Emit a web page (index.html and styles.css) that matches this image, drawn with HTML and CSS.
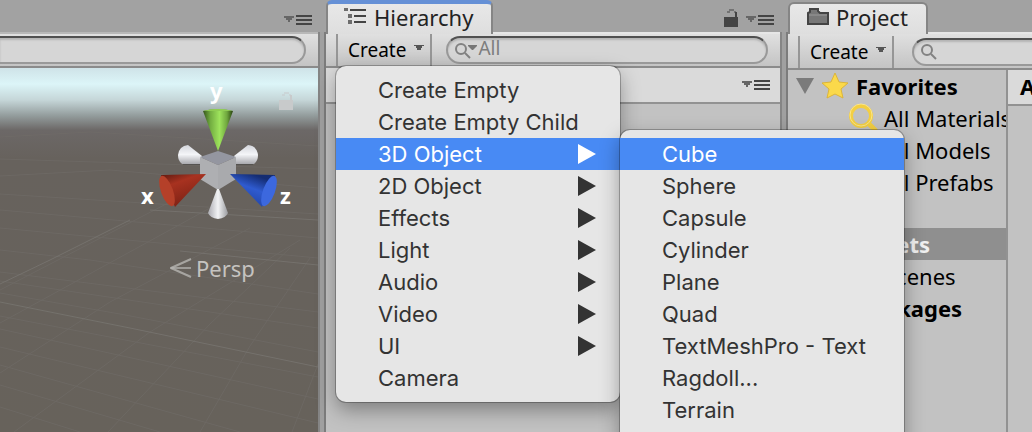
FILE: index.html
```html
<!DOCTYPE html>
<html lang="en">
<head>
  <meta charset="UTF-8">
  <meta name="viewport" content="width=device-width, initial-scale=1.0">
  <title>Unity Editor</title>
  <link rel="stylesheet" href="styles.css">
</head>
<body>
  <!-- shared icons -->
  <svg class="defs" width="0" height="0" aria-hidden="true">
    <symbol id="panel-menu" viewBox="0 0 28 12">
      <path d="M0 2h10v2h-2v2h-2v2h-2v-2h-2v-2h-2z" fill="#666"/>
      <path d="M12 1h16v2h-16zM12 5h16v2h-16zM12 9h16v2h-16z"/>
    </symbol>
    <symbol id="lock" viewBox="0 0 14 18">
      <path d="M0 8h11V3H13V8H14V18H0z"/>
      <path d="M3 4V2H5V0H10V2H12V4H10V2H6V4z" opacity=".5"/>
    </symbol>
    <symbol id="arrow" viewBox="0 0 18 20">
      <path d="M0 0L18 10L0 20z"/>
    </symbol>
    <symbol id="caret" viewBox="0 0 10 6">
      <path d="M0 0h10v1H8v2H7v2H3V3H2V1H0z"/>
    </symbol>
  </svg>

  <main class="editor">
    <section class="panel scene">
      <header class="tabs">
        <button class="icon-btn" aria-label="Scene options"><svg width="28" height="12"><use href="#panel-menu"/></svg></button>
      </header>
      <div class="toolbar">
        <label class="search search-scene"><input type="text" aria-label="Search scene"></label>
      </div>
      <div class="viewport">
        <svg class="grid" viewBox="0 0 318 364" preserveAspectRatio="none">
          <g class="minor">
            <path d="M0 69L90 64L318 78M0 91L318 101M0 108L110 102L318 120M0 126L318 146"/>
            <path d="M0 142L318 170M0 160L318 190M0 182L90 192L318 226M0 204L318 244M0 213L318 260"/>
            <path d="M0 225L120 246L318 284M0 248L318 309M0 261L318 331M0 279L318 355M0 297L240 364M0 317L160 364M0 339L80 364"/>
            <path d="M0 222L170 134M0 255L210 140M0 305L110 234L250 160M14 364L150 264L300 172M108 364L210 256L290 180M200 364L250 278L310 190M292 364L318 296"/>
          </g>
          <path class="major" d="M0 234L130 260L318 299M0 216L50 192L130 152M150 142L318 152M180 183L318 197"/>
        </svg>
        <div class="gizmo">
          <svg width="160" height="150" viewBox="136 78 160 150">
            <defs>
              <linearGradient id="green"><stop offset="0" stop-color="#34551b"/><stop offset=".25" stop-color="#73ae41"/><stop offset=".55" stop-color="#9ee35c"/><stop offset=".8" stop-color="#6fa63e"/><stop offset="1" stop-color="#27400f"/></linearGradient>
              <linearGradient id="white"><stop offset="0" stop-color="#aaaab0"/><stop offset=".5" stop-color="#f2f3f5"/><stop offset="1" stop-color="#999a9e"/></linearGradient>
              <linearGradient id="pale" x2="0" y2="1"><stop offset="0" stop-color="#d4d6dc"/><stop offset=".5" stop-color="#f4f5f8"/><stop offset="1" stop-color="#a9a9ae"/></linearGradient>
              <linearGradient id="red" x2=".5" y2="1"><stop offset="0" stop-color="#5c190f"/><stop offset=".35" stop-color="#a83220"/><stop offset="1" stop-color="#7b2114"/></linearGradient>
              <linearGradient id="blue" x1=".5" x2="0" y2="1"><stop offset="0" stop-color="#142c72"/><stop offset=".35" stop-color="#2f5bd0"/><stop offset="1" stop-color="#1c3a91"/></linearGradient>
            </defs>
            <path d="M183 164h18M235 164h18" stroke="#444" stroke-width="1"/>
            <path d="M178 155Q179 146 188 145L202 156L200 164H182Q178 161 178 155z" fill="url(#pale)"/>
            <path d="M258 155Q257 146 248 145L234 156L236 164H254Q258 161 258 155z" fill="url(#pale)"/>
            <path d="M200 157L218 151L236 157L218 165z" fill="#9496a0"/>
            <path d="M200 157L218 165V190L200 179z" fill="#aeafb2"/>
            <path d="M236 157L218 165V190L236 179z" fill="#a9aaad"/>
            <path d="M203 111Q218 107 233 111L218 151z" fill="url(#green)"/>
            <path d="M203 111Q218 107 233 111z" fill="#8fcd52"/>
            <path d="M217 189H219L228 213Q226 218 218 219Q210 218 208 213z" fill="url(#white)"/>
            <path d="M161 175L206 174L175 207z" fill="url(#red)"/>
            <ellipse cx="167" cy="191" rx="6" ry="16" transform="rotate(-20 167 191)" fill="#b54029"/>
            <path d="M275 175L230 174L262 207z" fill="url(#blue)"/>
            <ellipse cx="269" cy="191" rx="6" ry="16" transform="rotate(20 269 191)" fill="#3c68de"/>
            <g class="axis">
              <text x="210" y="99">y</text>
              <text x="141" y="204">x</text>
              <text x="280" y="204">z</text>
            </g>
          </svg>
          <button class="persp">
            <svg width="22" height="20" viewBox="0 0 22 20" fill="none" stroke="#b7b5b2" stroke-width="2"><path d="M21 1L1 10L21 19" opacity=".8"/><path d="M1 10H21" opacity=".7"/></svg>
            Persp
          </button>
        </div>
        <svg class="scene-lock" width="14" height="18"><use href="#lock"/></svg>
      </div>
    </section>

    <div class="divider"></div>

    <section class="panel hierarchy">
      <header class="tabs">
        <h2 class="tab tab-focus">
          <svg width="24" height="18" viewBox="0 0 24 18" fill="#444"><path d="M0 0h4v3H0zM4 6h4v4H4zM4 12h4v4H4z" opacity=".75"/><path d="M6 1h16v2H6zM10 7h12v2H10zM10 13h12v2H10z"/></svg>
          Hierarchy
        </h2>
        <svg class="lock" width="14" height="18"><use href="#lock"/></svg>
        <button class="icon-btn" aria-label="Hierarchy options"><svg width="28" height="12"><use href="#panel-menu"/></svg></button>
      </header>
      <div class="toolbar">
        <button class="create">Create <svg width="10" height="6"><use href="#caret"/></svg></button>
        <label class="search">
          <svg width="24" height="18" viewBox="0 0 24 18" fill="none" stroke="#828282" stroke-width="2"><circle cx="7" cy="8" r="5"/><path d="M11 12L16 17"/><path d="M14 4h9v1L19 9h-1L14 5z" fill="#777" stroke="none"/></svg>
          <input type="text" placeholder="All" aria-label="Search hierarchy">
        </label>
      </div>
      <div class="scene-row">
        <button class="icon-btn" aria-label="Scene menu"><svg width="28" height="12"><use href="#panel-menu"/></svg></button>
      </div>

      <div class="menu menu-create" role="menu">
        <button role="menuitem">Create Empty</button>
        <button role="menuitem">Create Empty Child</button>
        <button role="menuitem" class="selected">3D Object <svg width="18" height="20"><use href="#arrow"/></svg></button>
        <button role="menuitem">2D Object <svg width="18" height="20"><use href="#arrow"/></svg></button>
        <button role="menuitem">Effects <svg width="18" height="20"><use href="#arrow"/></svg></button>
        <button role="menuitem">Light <svg width="18" height="20"><use href="#arrow"/></svg></button>
        <button role="menuitem">Audio <svg width="18" height="20"><use href="#arrow"/></svg></button>
        <button role="menuitem">Video <svg width="18" height="20"><use href="#arrow"/></svg></button>
        <button role="menuitem">UI <svg width="18" height="20"><use href="#arrow"/></svg></button>
        <button role="menuitem">Camera</button>
      </div>
      <div class="menu menu-3d" role="menu">
        <button role="menuitem" class="selected">Cube</button>
        <button role="menuitem">Sphere</button>
        <button role="menuitem">Capsule</button>
        <button role="menuitem">Cylinder</button>
        <button role="menuitem">Plane</button>
        <button role="menuitem">Quad</button>
        <button role="menuitem">TextMeshPro - Text</button>
        <button role="menuitem">Ragdoll...</button>
        <button role="menuitem">Terrain</button>
      </div>
    </section>

    <div class="divider"></div>

    <section class="panel project">
      <header class="tabs">
        <h2 class="tab">
          <svg width="24" height="20" viewBox="0 0 24 20"><path d="M2 6L4 5V2H12V4L14 6H22V17H2z" fill="#777" stroke="#444" stroke-width="2"/><path d="M3 8H21" stroke="#999"/></svg>
          Project
        </h2>
      </header>
      <div class="toolbar">
        <button class="create">Create <svg width="10" height="6"><use href="#caret"/></svg></button>
        <label class="search">
          <svg width="18" height="18" viewBox="0 0 18 18" fill="none" stroke="#828282" stroke-width="2"><circle cx="7" cy="7" r="5"/><path d="M11 11L16 16"/></svg>
          <input type="text" aria-label="Search project">
        </label>
      </div>
      <div class="browser">
        <ul class="tree">
          <li class="root">
            <svg width="18" height="16" viewBox="0 0 18 16"><path d="M0 0H18L9 16z" fill="#7b7b7b"/></svg>
            <svg width="28" height="28" viewBox="0 0 28 28"><path d="M14 1L18 10L27 11L20 17L22 26L14 22L6 26L8 17L1 11L10 10z" fill="#fbd94a" stroke="#dcb53a"/></svg>
            Favorites
          </li>
          <li class="child">
            <svg width="30" height="30" viewBox="0 0 30 30" fill="none" stroke="#f3cf42" stroke-width="4"><circle cx="13" cy="13" r="10"/><path d="M20 20L28 28" stroke-width="5"/><circle cx="13" cy="12" r="11" stroke="#fbe58a" stroke-width="1"/></svg>
            All Materials
          </li>
          <li class="child"><span class="space"></span>All Models</li>
          <li class="child"><span class="space"></span>All Prefabs</li>
          <li class="root assets"><span class="space"></span>Assets</li>
          <li class="child"><span class="space"></span>Scenes</li>
          <li class="root"><span class="space"></span>Packages</li>
        </ul>
        <div class="content"><h3>Assets</h3></div>
      </div>
    </section>
  </main>
</body>
</html>
```
FILE: styles.css
```css
* {
  box-sizing: border-box;
}

body {
  margin: 0;
  background: #a2a2a2;
  font-family: "Noto Sans", "Open Sans", sans-serif;
  font-size: 22px;
  line-height: 32px;
  color: #000;
  overflow: hidden;
}

button {
  font: inherit;
  color: inherit;
  border: 0;
  padding: 0;
  background: none;
}

h2, h3, ul {
  margin: 0;
  padding: 0;
}

svg {
  flex: none;
}

.defs {
  position: absolute;
}

.editor {
  display: grid;
  grid-template-columns: minmax(0, 318fr) 8px minmax(0, 454fr) 8px minmax(0, 244fr);
  min-height: 100vh;
}

.panel {
  display: flex;
  flex-direction: column;
  min-width: 0;
}

.divider {
  margin-top: 32px;
  background: #a0a0a0;
  border-left: 2px solid #858585;
  border-right: 2px solid #7c7c7c;
}

/* tabs */
.tabs {
  display: flex;
  align-items: center;
  height: 34px;
  padding-right: 6px;
  padding-top: 8px;
  border-bottom: 2px solid #b8b8b8;
}

.icon-btn {
  display: flex;
  margin-left: auto;
  fill: #444;
}

.tab {
  display: flex;
  align-items: center;
  align-self: flex-end;
  gap: 6px;
  height: 32px;
  margin-bottom: -2px;
  padding: 0 18px 4px 16px;
  border: 2px solid #858585;
  border-bottom: 0;
  border-radius: 6px 6px 0 0;
  background: linear-gradient(#e8e8e8, #dedede);
  font-size: 22px;
  font-weight: 400;
  color: #222;
}

.hierarchy .tabs,
.project .tabs {
  border-bottom-color: #e6e6e6;
}

.hierarchy .tab {
  height: 34px;
}

.tab-focus {
  border-top: 4px solid #6590d6;
}

.lock {
  margin-left: auto;
  margin-bottom: 4px;
  fill: #444;
}

.lock + .icon-btn {
  margin-left: 8px;
}

/* toolbars */
.toolbar {
  display: flex;
  align-items: flex-start;
  height: 34px;
  border-bottom: 2px solid #8b8b8b;
  background: linear-gradient(#e0e0e0, #c4c4c4);
}

.create {
  display: flex;
  align-items: center;
  gap: 8px;
  height: 32px;
  margin-left: 10px;
  padding: 0 6px 0 10px;
  border-left: 2px solid #969696;
  border-right: 2px solid #969696;
  font-size: 19px;
  fill: #555;
}

.create svg {
  margin-bottom: 4px;
}

.search {
  display: flex;
  align-items: center;
  flex: 1;
  height: 28px;
  min-width: 0;
  margin: 2px 12px 0 14px;
  padding-left: 6px;
  border: 2px solid #999;
  border-top-color: #505050;
  border-radius: 14px;
  background: #d6d6d6;
  box-shadow: inset 0 2px 2px #b5b5b5;
}

.search input {
  flex: 1;
  min-width: 0;
  height: 24px;
  padding: 0 0 4px;
  border: 0;
  outline: 0;
  background: none;
  font: inherit;
  font-size: 19px;
}

.search input::placeholder {
  color: #7d7d7d;
}

.search-scene {
  margin-left: 0;
  border-left: 0;
  border-radius: 0 14px 14px 0;
}

/* scene view */
.viewport {
  position: relative;
  flex: 1;
  background: linear-gradient(#cfe3e8 0, #dcf5f8 16px, #c5d6d8 32px, #929b9b 48px, #6c6867 62px, #67625d 90px, #67625b 100%);
}

.grid {
  position: absolute;
  width: 100%;
  height: 100%;
  fill: none;
}

.minor {
  stroke: #716d69;
  stroke-width: 1;
  opacity: .6;
}

.major {
  stroke: #7b7773;
  opacity: .7;
}

.gizmo {
  position: absolute;
  top: 10px;
  right: 22px;
  color: #c5c3c0;
}

.gizmo > svg {
  display: block;
}

.axis {
  font-size: 22px;
  font-weight: 700;
  fill: #fff;
}

.persp {
  display: flex;
  align-items: center;
  gap: 4px;
  margin: 24px 0 0 34px;
}

.scene-lock {
  position: absolute;
  top: 24px;
  right: 25px;
  fill: #c8cacb;
}

/* hierarchy */
.hierarchy {
  position: relative;
  z-index: 1;
}

.hierarchy,
.project {
  background: linear-gradient(#a2a2a2 32px, #c2c2c2 32px);
}

.scene-row {
  display: flex;
  align-items: center;
  height: 36px;
  padding-right: 10px;
  border-bottom: 2px solid #929292;
  background: #dadada;
}

.menu {
  position: absolute;
  width: 284px;
  padding: 8px 0;
  border-radius: 10px;
  background: #e6e6e6;
  box-shadow: 0 0 0 1px rgba(0, 0, 0, .25), 0 8px 20px rgba(0, 0, 0, .35);
  font-family: Inter, Roboto, sans-serif;
  font-size: 22px;
  color: #333;
}

.menu button {
  display: flex;
  align-items: center;
  justify-content: space-between;
  width: 100%;
  height: 32px;
  padding: 0 24px 0 42px;
  fill: #333;
}

.menu .selected {
  background: #488af4;
  color: #fff;
  fill: #fff;
}

.menu-create {
  top: 66px;
  left: 10px;
}

.menu-3d {
  top: 130px;
  left: 294px;
  height: 320px;
}

/* project */
.project .toolbar {
  height: 36px;
}

.project .create,
.project .search {
  margin-top: 2px;
}

.project .search {
  margin: 4px -20px 0 18px;
}

.project {
  overflow: hidden;
}

.browser {
  display: flex;
  flex: 1;
}

.tree {
  flex: 1;
  min-width: 0;
  overflow: hidden;
  list-style: none;
  white-space: nowrap;
}

.tree li {
  display: flex;
  align-items: center;
  height: 32px;
}

.root {
  gap: 7px;
  padding-left: 8px;
  font-weight: 700;
}

.child {
  gap: 6px;
  padding-left: 60px;
}

.space {
  width: 30px;
}

.root .space {
  width: 56px;
}

.tree .assets {
  margin-top: 30px;
  background: #8f8f8f;
  color: #f0f0f0;
}

.content {
  width: 26px;
  border-left: 2px solid #929292;
  overflow: hidden;
}

.content h3 {
  height: 36px;
  padding-left: 12px;
  border-bottom: 2px solid #929292;
  background: #dadada;
  font-size: 22px;
}
```
